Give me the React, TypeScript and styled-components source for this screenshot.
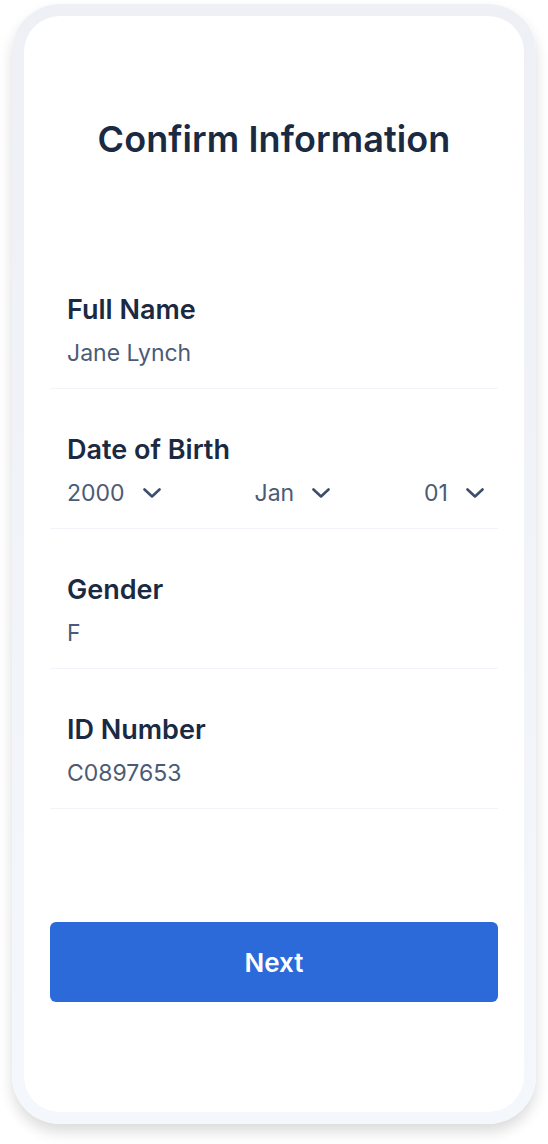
import styled, { createGlobalStyle } from 'styled-components';

const GlobalStyle = createGlobalStyle`
    body {
        margin: 0;
        background: #ffffff;
        font-family: Inter, 'Noto Sans', sans-serif;
        -webkit-font-smoothing: antialiased;
    }
`;

const StyledPage = styled.div`
    padding: 4px 12px 20px;
`;

const StyledPhone = styled.div`
    height: 1120px;
    box-sizing: border-box;
    padding: 12px;
    border-radius: 48px;
    background: linear-gradient(#eef0f5, #f4f7fb);
    box-shadow: 0 8px 14px rgba(0, 0, 0, 0.14);
`;

const StyledScreen = styled.main`
    height: 100%;
    box-sizing: border-box;
    background: #ffffff;
    border-radius: 36px;
    padding: 102px 26px 0;
    display: flex;
    flex-direction: column;
`;

const StyledTitle = styled.h1`
    margin: 0 0 89px;
    font-size: 36px;
    line-height: 42px;
    font-weight: 600;
    letter-spacing: 0.1px;
    color: #1a2a42;
    text-align: center;
`;

const StyledField = styled.section`
    padding: 44px 14px 21px 17px;
    border-bottom: 1px solid #f1f5fa;
    display: flex;
    flex-direction: column;
    gap: 12px;
`;

const StyledLabel = styled.h2`
    margin: 0;
    font-size: 27px;
    line-height: 34px;
    font-weight: 600;
    color: #1a2a42;
`;

const StyledValue = styled.div`
    font-size: 23px;
    line-height: 28px;
    color: #4b5b76;
`;

const StyledDateRow = styled.div`
    display: flex;
    justify-content: space-between;
`;

const StyledSelect = styled.div`
    display: flex;
    align-items: center;
    gap: 18px;
    font-size: 23px;
    line-height: 28px;
    color: #4b5b76;
`;

const StyledButton = styled.button`
    margin-top: 113px;
    height: 80px;
    border: none;
    border-radius: 6px;
    background: #2b6ad8;
    color: #ffffff;
    font-family: inherit;
    font-size: 26px;
    font-weight: 600;
`;

const Chevron = () => (
    <svg width="18" height="10" viewBox="0 0 18 10" fill="none">
        <polyline
            points="1.5,1.5 9,8.5 16.5,1.5"
            stroke="#3d4e6b"
            strokeWidth="2.6"
            strokeLinecap="round"
            strokeLinejoin="round"
        />
    </svg>
);

const fields = [
    { label: 'Full Name', value: 'Jane Lynch' },
    { label: 'Date of Birth', date: ['2000', 'Jan', '01'] },
    { label: 'Gender', value: 'F' },
    { label: 'ID Number', value: 'C0897653' },
];

const App = () => (
    <StyledPage>
        <GlobalStyle />
        <StyledPhone>
            <StyledScreen>
                <StyledTitle>Confirm Information</StyledTitle>
                {fields.map(({ label, value, date }) => (
                    <StyledField key={label}>
                        <StyledLabel>{label}</StyledLabel>
                        {date ? (
                            <StyledDateRow>
                                {date.map((part) => (
                                    <StyledSelect key={part}>
                                        {part}
                                        <Chevron />
                                    </StyledSelect>
                                ))}
                            </StyledDateRow>
                        ) : (
                            <StyledValue>{value}</StyledValue>
                        )}
                    </StyledField>
                ))}
                <StyledButton>Next</StyledButton>
            </StyledScreen>
        </StyledPhone>
    </StyledPage>
);

export default App;
